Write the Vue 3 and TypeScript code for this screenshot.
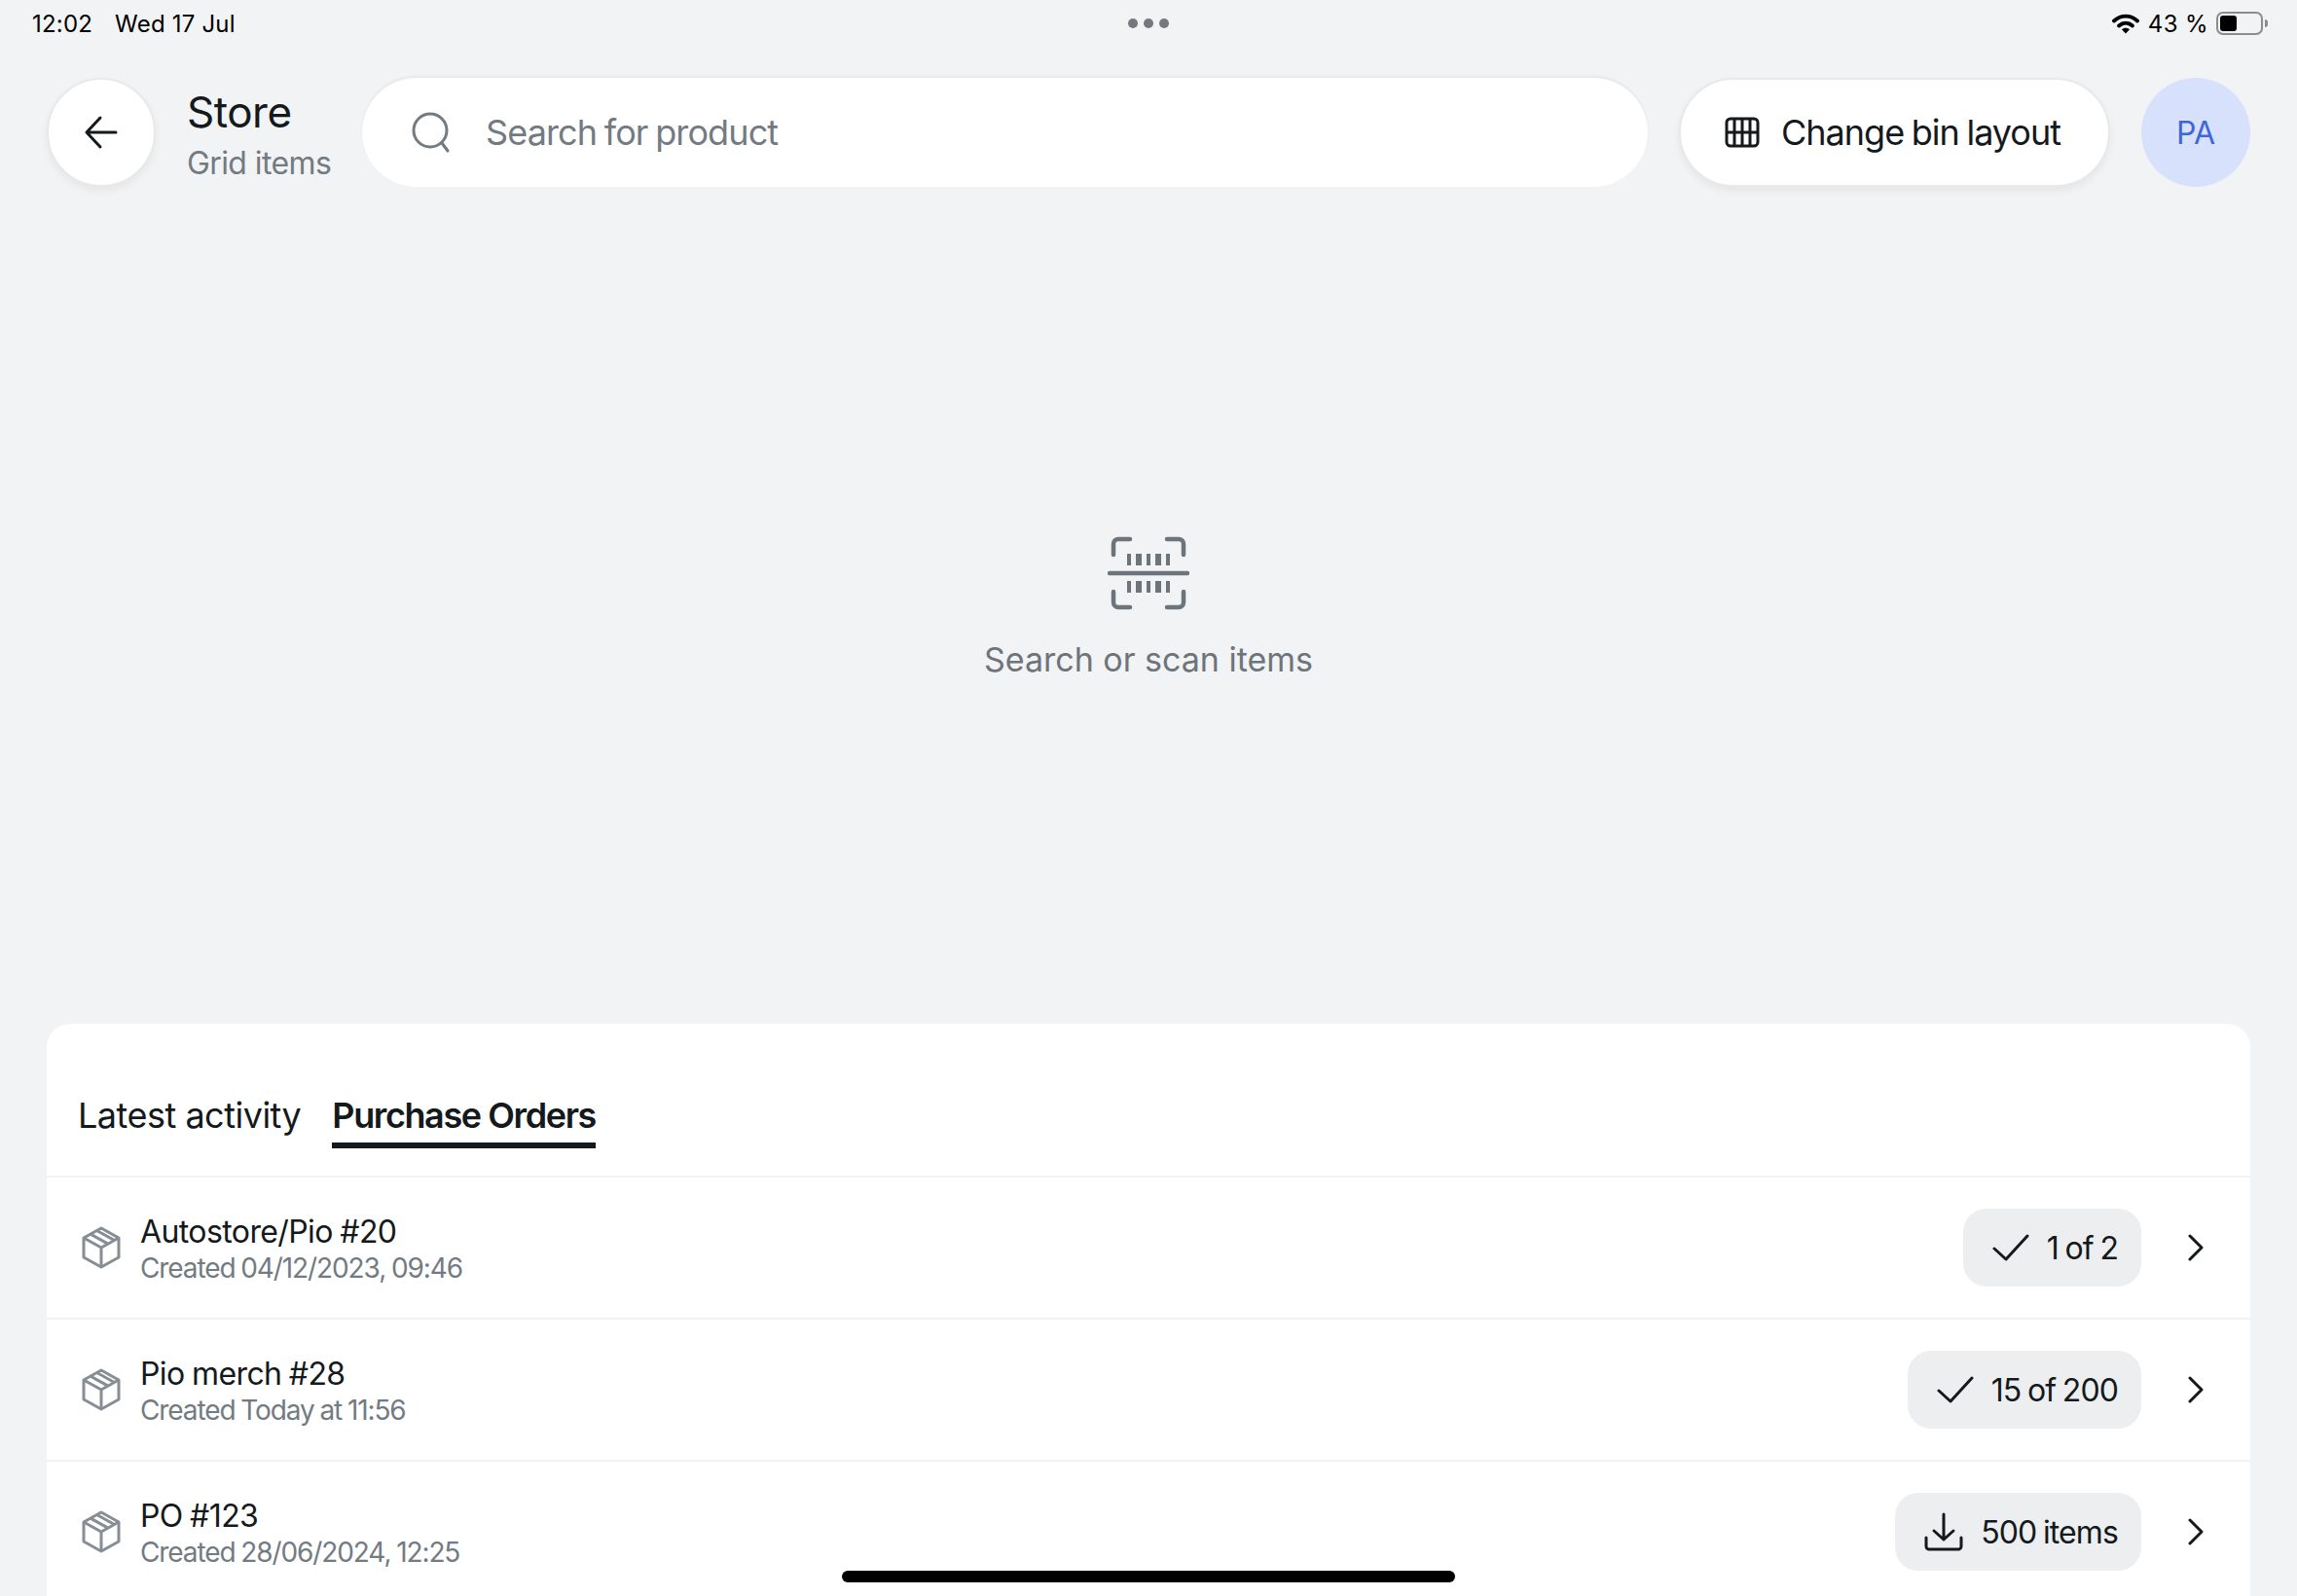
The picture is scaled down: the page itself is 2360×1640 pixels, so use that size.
<template>
  <div class="page">
    <div class="status-bar">
      <div class="status-left">
        <span>12:02</span>
        <span>Wed 17 Jul</span>
      </div>
      <div class="status-dots"><i></i><i></i><i></i></div>
      <div class="status-right">
        <svg class="wifi" width="28" height="21" viewBox="0 0 28 21">
          <path d="M2 7.5C9.200 1 18.800 1 26 7.500" fill="none" stroke="#000" stroke-width="3.800" stroke-linecap="round" />
          <path d="M7 12.500C11.200 8.800 16.800 8.800 21 12.500" fill="none" stroke="#000" stroke-width="3.800" stroke-linecap="round" />
          <path d="M10 16.200C12.400 14.200 15.600 14.200 18 16.200L14 20.500Z" fill="#000" />
        </svg>
        <span class="percent">43 %</span>
        <div class="battery"><div class="battery-fill" :style="{ width: '43%' }"></div></div>
        <div class="battery-tip"></div>
      </div>
    </div>

    <header class="top">
      <button class="back">
        <svg width="36" height="36" viewBox="0 0 36 36" fill="none" stroke="#14191c" stroke-width="3" stroke-linecap="round" stroke-linejoin="round">
          <path d="M33 18H4M17 3 3 18l14 15" />
        </svg>
      </button>
      <div class="title">
        <div class="title-main">Store</div>
        <div class="title-sub">Grid items</div>
      </div>
      <div class="search">
        <svg width="42" height="42" viewBox="0 0 42 42" fill="none" stroke="#737b82" stroke-width="3" stroke-linecap="round">
          <circle cx="20" cy="19" r="17" />
          <path d="m32 32 6 8" />
        </svg>
        <span>Search for product</span>
      </div>
      <button class="layout-btn">
        <svg width="36" height="32" viewBox="0 0 36 32" fill="none" stroke="#14191c" stroke-width="3">
          <rect x="2" y="2" width="32" height="28" rx="4" />
          <path d="M10 2v28M18 2v28M26 2v28M2 16h32" />
        </svg>
        <span>Change bin layout</span>
      </button>
      <div class="avatar">PA</div>
    </header>

    <main class="empty">
      <svg width="84" height="76" viewBox="0 0 84 76" fill="none" stroke="#6d747a" stroke-width="4.500">
        <path d="M6 19V8a5 5 0 0 1 5-5h12M61 3h12a5 5 0 0 1 5 5v11M6 57v11a5 5 0 0 0 5 5h12M61 73h12a5 5 0 0 0 5-5V57" stroke-linecap="round" />
        <path d="M2 38h80" stroke-linecap="round" />
        <path d="M22 18v12M42 18v12M62 18v12M22 46v12M42 46v12M62 46v12" stroke-width="4" />
        <path d="M32 18v12M52 18v12M32 46v12M52 46v12" stroke-width="6" />
      </svg>
      <div class="empty-text">Search or scan items</div>
    </main>

    <section class="panel">
      <div class="tabs">
        <div class="tab">Latest activity</div>
        <div class="tab active">Purchase Orders</div>
      </div>
      <div v-for="order in orders" :key="order.id" class="row">
        <svg class="box" width="40" height="44" viewBox="0 0 40 44" fill="none" stroke="#868d94" stroke-width="3" stroke-linejoin="round">
          <path d="M20 2 38 12v20L20 42 2 32V12Z" />
          <path d="M2 12l18 10 18-10M20 22v20M9 8.100l18 10M15.500 4.500l18 10" />
        </svg>
        <div class="row-text">
          <div class="row-name">{{ order.name }}</div>
          <div class="row-date">{{ order.date }}</div>
        </div>
        <div class="pill">
          <svg v-if="order.done" width="38" height="28" viewBox="0 0 38 28" fill="none" stroke="#14191c" stroke-width="3" stroke-linecap="round" stroke-linejoin="round">
            <path d="M2 15l12 11L36 2" />
          </svg>
          <svg v-else width="40" height="40" viewBox="0 0 40 40" fill="none" stroke="#14191c" stroke-width="3" stroke-linecap="round" stroke-linejoin="round">
            <path d="M20 2v26M10 19l10 9 10-9" />
            <path d="M2 26v9a3 3 0 0 0 3 3h30a3 3 0 0 0 3-3v-9" />
          </svg>
          <span>{{ order.count }}</span>
        </div>
        <svg class="chevron" width="16" height="28" viewBox="0 0 16 28" fill="none" stroke="#14191c" stroke-width="3" stroke-linecap="round" stroke-linejoin="round">
          <path d="M2 2l12 12L2 26" />
        </svg>
      </div>
    </section>

    <div class="home-bar"></div>
  </div>
</template>

<script setup lang="ts">
interface Order {
  id: number
  name: string
  date: string
  count: string
  done: boolean
}

const orders: Order[] = [
  { id: 20, name: 'Autostore/Pio #20', date: 'Created 04/12/2023, 09:46', count: '1 of 2', done: true },
  { id: 28, name: 'Pio merch #28', date: 'Created Today at 11:56', count: '15 of 200', done: true },
  { id: 123, name: 'PO #123', date: 'Created 28/06/2024, 12:25', count: '500 items', done: false }
]
</script>

<style>
html,
body {
  margin: 0;
  background: #f2f3f5;
}
</style>

<style scoped>
.page {
  position: relative;
  width: 2360px;
  height: 1640px;
  overflow: hidden;
  display: flex;
  flex-direction: column;
  background: #f2f3f5;
  color: #14191c;
  font-family: Inter, "Liberation Sans", sans-serif;
}

.status-bar {
  height: 48px;
  padding: 0 30px;
  display: grid;
  grid-template-columns: 1fr auto 1fr;
  align-items: center;
  font-size: 24px;
  color: #000;
  flex: none;
}

.status-left {
  display: flex;
  gap: 23px;
  padding-left: 3px;
  letter-spacing: 0.2px;
}

.status-dots {
  display: flex;
  gap: 6px;
}

.status-dots i {
  width: 10px;
  height: 10px;
  border-radius: 50%;
  background: #75797e;
}

.status-right {
  display: flex;
  align-items: center;
  justify-content: flex-end;
}

.percent {
  margin-left: 9px;
  margin-right: 8px;
  letter-spacing: 0.4px;
}

.battery {
  width: 48px;
  height: 24px;
  padding: 2px;
  box-sizing: border-box;
  border: 2px solid #8c8c8c;
  border-radius: 7px;
}

.battery-fill {
  height: 100%;
  background: #000;
  border-radius: 3px;
}

.battery-tip {
  width: 3px;
  height: 8px;
  margin-left: 2px;
  background: #8c8c8c;
  border-radius: 0 3px 3px 0;
}

.top {
  flex: none;
  height: 112px;
  margin-top: 32px;
  padding: 0 48px;
  display: flex;
  align-items: center;
}

.back {
  width: 112px;
  height: 112px;
  flex: none;
  border: 2px solid #e8e9ea;
  border-radius: 50%;
  background: #fff;
  box-shadow: 0 4px 8px #0000000f;
  display: flex;
  align-items: center;
  justify-content: center;
  padding: 0;
}

.title {
  margin-left: 32px;
  padding-top: 4px;
  width: 180px;
  flex: none;
}

.title-main {
  font-size: 44px;
  line-height: 56px;
  letter-spacing: -0.5px;
}

.title-sub {
  margin-top: 4px;
  font-size: 32px;
  line-height: 42px;
  letter-spacing: -0.6px;
  color: #737b82;
}

.search {
  width: 1321px;
  height: 112px;
  flex: none;
  box-sizing: border-box;
  padding-left: 50px;
  display: flex;
  align-items: center;
  gap: 35px;
  background: #fff;
  border-radius: 56px;
  box-shadow: 0 -2px 3px #0000000d;
  font-size: 36px;
  letter-spacing: -0.9px;
  word-spacing: -1.500px;
  color: #737b82;
}

.layout-btn {
  width: 443px;
  height: 112px;
  flex: none;
  margin-left: 32px;
  box-sizing: border-box;
  border: 2px solid #e8e9ea;
  border-radius: 56px;
  background: #fff;
  box-shadow: 0 4px 8px #0000000f;
  display: flex;
  align-items: center;
  gap: 22px;
  padding: 0 0 0 45px;
  font-family: inherit;
  font-size: 36px;
  letter-spacing: -1px;
  word-spacing: -1.500px;
  color: #14191c;
}

.avatar {
  width: 112px;
  height: 112px;
  flex: none;
  margin-left: 32px;
  border-radius: 50%;
  background: #d7e1fb;
  color: #3f66d8;
  font-size: 32px;
  display: flex;
  align-items: center;
  justify-content: center;
}

.empty {
  flex: 1;
  display: flex;
  flex-direction: column;
  align-items: center;
  justify-content: center;
  gap: 30px;
  padding-top: 5px;
}

.empty-text {
  font-size: 34px;
  color: #6d747a;
}

.panel {
  flex: none;
  height: 588px;
  margin: 0 48px;
  background: #fff;
  border-radius: 24px 24px 0 0;
}

.tabs {
  height: 158px;
  box-sizing: border-box;
  padding: 72px 32px 0;
  display: flex;
  align-items: flex-start;
  gap: 32px;
  border-bottom: 2px solid #f2f3f5;
}

.tab {
  font-size: 36px;
  line-height: 44px;
  letter-spacing: -0.5px;
  padding-bottom: 6px;
  border-bottom: 6px solid transparent;
}

.tab.active {
  font-weight: 600;
  letter-spacing: -1.400px;
  border-bottom-color: #14191c;
}

.row {
  height: 146px;
  box-sizing: border-box;
  padding: 0 48px 0 36px;
  display: flex;
  align-items: center;
  border-bottom: 2px solid #f2f3f5;
}

.box {
  flex: none;
}

.row-text {
  margin-left: 20px;
  padding-top: 4px;
  flex: 1;
}

.row-name {
  font-size: 32px;
  line-height: 38px;
  letter-spacing: -0.6px;
  word-spacing: -1px;
}

.row-date {
  font-size: 28px;
  line-height: 36px;
  letter-spacing: -1.100px;
  word-spacing: -1px;
  color: #737b82;
}

.pill {
  height: 80px;
  box-sizing: border-box;
  padding: 0 24px 0 30px;
  display: flex;
  align-items: center;
  gap: 18px;
  background: #eceef0;
  border-radius: 24px;
  font-size: 32px;
  letter-spacing: -0.9px;
  word-spacing: -1.500px;
}

.chevron {
  margin-left: 48px;
  flex: none;
}

.home-bar {
  position: absolute;
  left: 865px;
  bottom: 14px;
  width: 630px;
  height: 12px;
  border-radius: 6px;
  background: #000;
}
</style>
